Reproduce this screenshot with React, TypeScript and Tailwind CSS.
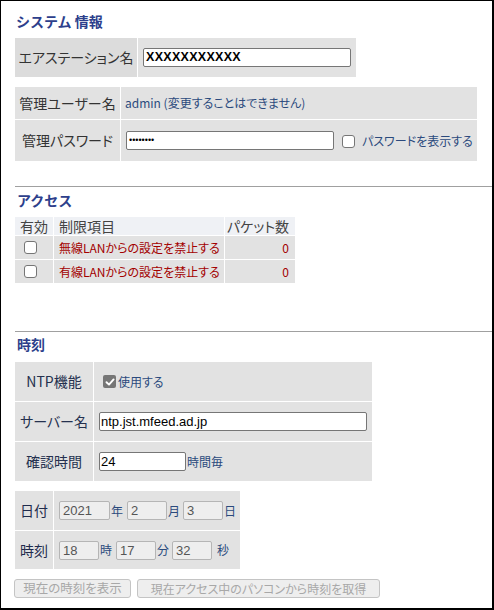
import React from "react";

const Box = () => (
  <span className="inline-block w-[13px] h-[13px] border border-[#767676] rounded-[3px] bg-white shrink-0" />
);

const Checked = () => (
  <span className="inline-flex items-center justify-center w-[13px] h-[13px] rounded-[2px] bg-[#767676] shrink-0">
    <svg width="10" height="10" viewBox="0 0 10 10">
      <path d="M1.5 5.2 L4 7.6 L8.6 2.4" stroke="white" strokeWidth="1.9" fill="none" strokeLinecap="round" strokeLinejoin="round" />
    </svg>
  </span>
);

const DisInput = ({ w, v }: { w: string; v: string }) => (
  <div className={`${w} h-[19px] border border-[#b5b5b5] rounded-[2px] bg-[#eeeeee] text-[13px] leading-[17px] text-[#555] pl-[3px] font-['Liberation_Sans',sans-serif] shrink-0`}>
    {v}
  </div>
);

export default function App() {
  return (
    <div className="w-[494px] h-[610px] box-border border-l border-t border-r-2 border-b-2 border-black bg-white pl-[14px] overflow-hidden font-['Noto_Sans_CJK_JP','Noto_Sans_CJK_SC',sans-serif] [font-feature-settings:'palt']">
      <h2 className="mt-[10px] h-[20px] leading-[20px] text-[14px] font-bold text-[#2d3f8c] pl-[1px] [font-feature-settings:normal]">
        システム 情報
      </h2>

      <div className="mt-[7px] flex gap-px w-[341px] h-[39px]">
        <div className="w-[122px] bg-[#dcdcdc] flex items-center justify-center text-[14px] text-[#333]">
          エアステーション名
        </div>
        <div className="flex-1 bg-[#e2e2e2] flex items-center pl-[5px]">
          <div className="w-[208px] h-[19px] border border-[#767676] rounded-[2px] bg-white pl-[2px] text-[12.5px] leading-[17px] font-bold text-black tracking-[0.3px] font-['Liberation_Sans',sans-serif]">
            XXXXXXXXXXX
          </div>
        </div>
      </div>

      <div className="mt-[10px] grid grid-cols-[105px_356px] grid-rows-[32px_41px] gap-px">
        <div className="bg-[#e2e2e2] flex items-center justify-center text-[14px] text-[#333]">管理ユーザー名</div>
        <div className="bg-[#e2e2e2] flex items-center pl-[4px] text-[12px] text-[#2b4a7d]">admin (変更することはできません)</div>
        <div className="bg-[#e2e2e2] flex items-center justify-center text-[14px] text-[#333]">管理パスワード</div>
        <div className="bg-[#e2e2e2] flex items-center pl-[5px]">
          <div className="w-[208px] h-[19px] border border-[#767676] rounded-[2px] bg-white pl-[2px] flex items-center text-[9px] leading-[17px] text-black font-['Liberation_Sans',sans-serif]">
            ••••••••
          </div>
          <span className="ml-[8px]"><Box /></span>
          <span className="ml-[7px] text-[12px] text-[#2b4a7d]">パスワードを表示する</span>
        </div>
      </div>

      <div className="mt-[25px] h-px bg-[#a0a0a0]" />

      <h2 className="mt-[3px] h-[20px] leading-[20px] text-[14px] font-bold text-[#2d3f8c] pl-[2px] [font-feature-settings:normal]">
        アクセス
      </h2>

      <div className="mt-[7px] grid grid-cols-[38px_170px_70px] grid-rows-[18px_23px_23px] gap-px w-[280px] text-[14px]">
        <div className="bg-[#eff1f5] flex items-center pl-[5px] text-[#444] leading-[18px]">有効</div>
        <div className="bg-[#eff1f5] flex items-center pl-[5px] text-[#444] leading-[18px]">制限項目</div>
        <div className="bg-[#eff1f5] flex items-center justify-end pr-[6px] text-[#444] leading-[18px]">パケット数</div>

        <div className="bg-[#e2e2e2] flex items-center pl-[9px]"><Box /></div>
        <div className="bg-[#e2e2e2] flex items-center pl-[5px] text-[12px] text-[#a30000]">無線LANからの設定を禁止する</div>
        <div className="bg-[#e2e2e2] flex items-center justify-end pr-[6px] text-[12px] text-[#a30000]">0</div>

        <div className="bg-[#e2e2e2] flex items-center pl-[9px]"><Box /></div>
        <div className="bg-[#e2e2e2] flex items-center pl-[5px] text-[12px] text-[#a30000]">有線LANからの設定を禁止する</div>
        <div className="bg-[#e2e2e2] flex items-center justify-end pr-[6px] text-[12px] text-[#a30000]">0</div>
      </div>

      <div className="mt-[48px] h-px bg-[#a0a0a0]" />

      <h2 className="mt-[2px] h-[20px] leading-[20px] text-[14px] font-bold text-[#2d3f8c] pl-[2px] [font-feature-settings:normal]">
        時刻
      </h2>

      <div className="mt-[8px] grid grid-cols-[78px_278px] grid-rows-[39px_39px_39px] gap-px w-[357px]">
        <div className="bg-[#e2e2e2] flex items-center justify-center text-[14px] text-[#25314f]">NTP機能</div>
        <div className="bg-[#e2e2e2] flex items-center pl-[9px]">
          <Checked />
          <span className="ml-[2px] text-[12px] text-[#2b4a7d]">使用する</span>
        </div>
        <div className="bg-[#e2e2e2] flex items-center justify-center text-[14px] text-[#25314f]">サーバー名</div>
        <div className="bg-[#e2e2e2] flex items-center pl-[5px]">
          <div className="w-[268px] h-[19px] border border-[#767676] rounded-[2px] bg-white pl-[1px] text-[13px] leading-[17px] text-black font-['Liberation_Sans',sans-serif]">
            ntp.jst.mfeed.ad.jp
          </div>
        </div>
        <div className="bg-[#e2e2e2] flex items-center justify-center text-[14px] text-[#25314f]">確認時間</div>
        <div className="bg-[#e2e2e2] flex items-center pl-[5px]">
          <div className="w-[87px] h-[19px] border border-[#767676] rounded-[2px] bg-white pl-[1px] text-[13px] leading-[17px] text-black font-['Liberation_Sans',sans-serif]">
            24
          </div>
          <span className="ml-px text-[12px] text-[#2b4a7d]">時間毎</span>
        </div>
      </div>

      <div className="mt-[10px] grid grid-cols-[38px_186px] grid-rows-[39px_38px] gap-px w-[225px]">
        <div className="bg-[#e2e2e2] flex items-center justify-center text-[14px] text-[#1f2b4d]">日付</div>
        <div className="bg-[#e2e2e2] flex items-center pl-[5px] text-[12px] text-[#2b4a7d]">
          <DisInput w="w-[51px]" v="2021" />
          <span className="ml-[1px] w-[12px]">年</span>
          <span className="ml-[4px]"><DisInput w="w-[40px]" v="2" /></span>
          <span className="ml-[1px] w-[12px]">月</span>
          <span className="ml-[3px]"><DisInput w="w-[40px]" v="3" /></span>
          <span className="ml-[1px]">日</span>
        </div>
        <div className="bg-[#e2e2e2] flex items-center justify-center text-[14px] text-[#1f2b4d]">時刻</div>
        <div className="bg-[#e2e2e2] flex items-center pl-[5px] text-[12px] text-[#2b4a7d]">
          <DisInput w="w-[40px]" v="18" />
          <span className="ml-[1px] w-[12px]">時</span>
          <span className="ml-[4px]"><DisInput w="w-[40px]" v="17" /></span>
          <span className="ml-[1px] w-[12px]">分</span>
          <span className="ml-[3px]"><DisInput w="w-[40px]" v="32" /></span>
          <span className="ml-[5px]">秒</span>
        </div>
      </div>

      <div className="mt-[10px] flex gap-[6px] -ml-[1px]">
        <div className="w-[117px] h-[19px] border border-[#c4c4c4] rounded-[3px] bg-[#eeeeee] flex items-center justify-center text-[12.5px] text-[#a8a8a8]">
          現在の時刻を表示
        </div>
        <div className="w-[243px] h-[19px] border border-[#c4c4c4] rounded-[3px] bg-[#eeeeee] flex items-center justify-center text-[12px] text-[#a8a8a8]">
          現在アクセス中のパソコンから時刻を取得
        </div>
      </div>
    </div>
  );
}
